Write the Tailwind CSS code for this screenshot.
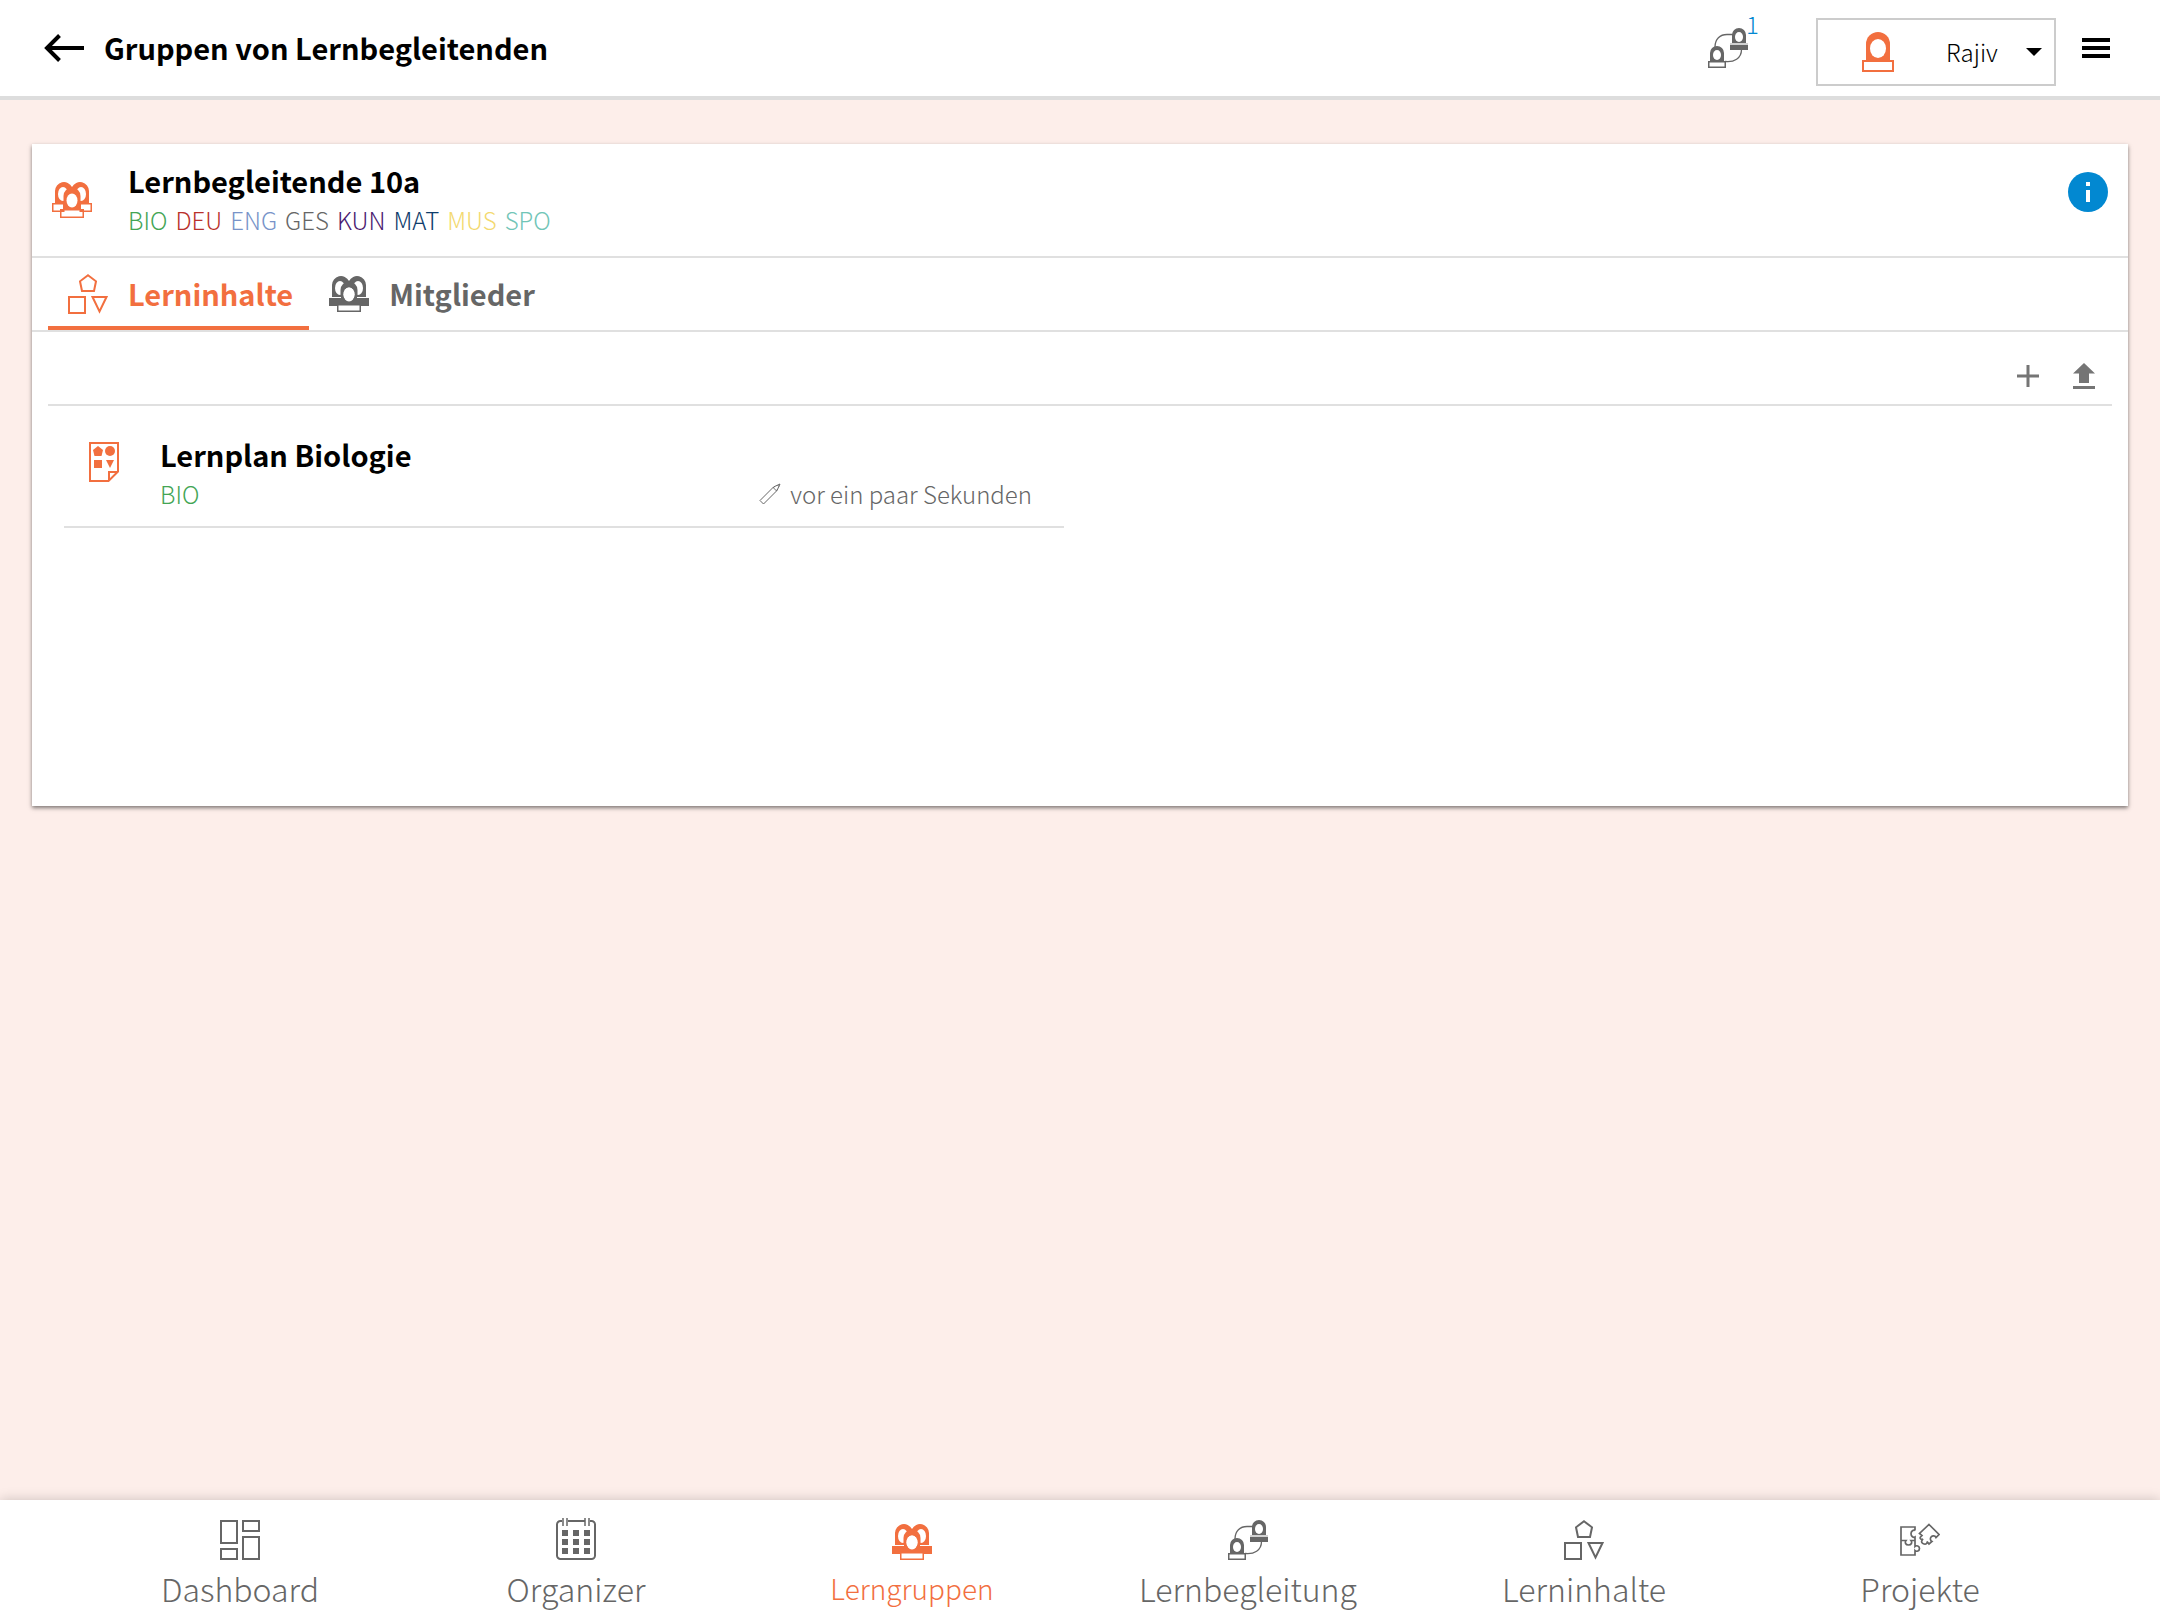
<!DOCTYPE html>
<html lang="de">
<head>
  <meta charset="utf-8" />
  <meta name="viewport" content="width=device-width, initial-scale=1.0" />
  <title>Gruppen von Lernbegleitenden</title>
  <script src="https://cdn.jsdelivr.net/npm/@tailwindcss/browser@4"></script>
</head>
<body class="bg-[#fdeeea] text-black font-['Noto_Sans_CJK_SC','Open_Sans',sans-serif] font-light antialiased">

  <!-- Icons -->
  <svg class="hidden" aria-hidden="true">
    <symbol id="icon-heads" viewBox="0 0 40 36">
      <path fill="currentColor" d="M3 21V9a9 9 0 0 1 17-4 9 9 0 0 1 17 4v12z" />
      <ellipse cx="11" cy="12" rx="5" ry="7" fill="#fff" />
      <ellipse cx="29" cy="12" rx="5" ry="7" fill="#fff" />
      <path fill="currentColor" d="M11.500 27V14a8.500 8.500 0 0 1 17 0v13z" />
      <ellipse cx="20" cy="18.500" rx="5.500" ry="7" fill="#fff" />
    </symbol>
    <symbol id="icon-group" viewBox="0 0 40 36">
      <use href="#icon-heads" width="40" height="36" />
      <path fill="#fff" stroke="currentColor" stroke-width="1.500" d="M.75 21.750h11v7.500h-11zM28.250 21.750h11v7.500h-11zM8.750 27.750h22.500v7.500H8.750z" />
    </symbol>
    <symbol id="icon-group-solid" viewBox="0 0 40 36">
      <use href="#icon-heads" width="40" height="36" />
      <path fill="#fff" d="M0 21h12v1H0zM28 21h12v1H28z" />
      <path fill="currentColor" d="M0 22h40v8H0z" />
      <ellipse cx="20" cy="18.500" rx="5.500" ry="7" fill="#fff" />
      <path fill="#fff" stroke="currentColor" stroke-width="1.500" d="M8.750 28.750h22.500v6.500H8.750z" />
    </symbol>
    <symbol id="icon-pair" viewBox="0 0 40 40">
      <path fill="none" stroke="currentColor" stroke-width="1.300" d="M7 19C7 11 12 6.500 19 6.500h6M17 33.500c9 1 16.500-3 16.500-12" />
      <path fill="currentColor" d="M24 15V7a7 7 0 0 1 14 0v8zM2 33v-8a7 7 0 0 1 14 0v8zM22 17h18v5H22z" />
      <path fill="currentColor" fill-opacity=".3" d="M22 15h18v2H22z" />
      <ellipse cx="31" cy="9" rx="4" ry="5" fill="#fff" />
      <ellipse cx="9" cy="27" rx="4" ry="5" fill="#fff" />
      <path fill="#fff" stroke="currentColor" stroke-width="1.500" d="M.75 33.750h16.500v5.500H.75z" />
    </symbol>
    <symbol id="icon-shapes" viewBox="0 0 40 40">
      <path fill="none" stroke="currentColor" stroke-width="2" d="M20 1.300l8 6-2 9.700H14l-2-9.700zM1 23h16v16H1zM24.500 23h14L31.500 37.500z" />
    </symbol>
  </svg>

  <div class="min-h-screen flex flex-col">
    <header class="h-[100px] shrink-0 flex items-start justify-between bg-white border-b-4 border-[#dddddd]">
      <div class="h-24 pl-11 flex items-center gap-5">
        <a href="#" aria-label="Zurück">
          <svg class="w-10 h-7" viewBox="0 0 40 28" fill="none" stroke="currentColor" stroke-width="4">
            <path d="M40 14H3M15.500 1.500L3 14l12.500 12.500" />
          </svg>
        </a>
        <h1 class="pb-[2px] text-[29px] leading-10 font-bold">Gruppen von Lernbegleitenden</h1>
      </div>

      <div class="h-24 pr-[50px] flex items-center">
        <button type="button" class="relative mr-[68px] text-[#666666]" aria-label="Verbindungen">
          <svg class="size-10"><use href="#icon-pair" /></svg>
          <span class="absolute left-[38px] -top-5 text-2xl leading-8 text-[#0288d1]">1</span>
        </button>
        <div class="mt-2 w-60 h-[68px] pl-11 pr-3 flex items-center border-2 border-[#cccccc]">
          <svg class="w-8 h-10 shrink-0 text-[#f26f3f]" viewBox="0 0 32 40">
            <path fill="currentColor" d="M4 28V12a12 12 0 0 1 24 0v16z" />
            <ellipse cx="16" cy="16.500" rx="8" ry="9.500" fill="#fff" />
            <path fill="#fff" stroke="currentColor" stroke-width="2" d="M1 29h30v10H1z" />
          </svg>
          <select aria-label="Benutzer" class="ml-[52px] grow min-w-0 appearance-none bg-transparent text-2xl leading-10 outline-none">
            <option>Rajiv</option>
          </select>
          <svg class="w-4 h-2 shrink-0" viewBox="0 0 16 8"><path d="M0 0h16L8 8z" /></svg>
        </div>
        <button type="button" class="ml-[26px]" aria-label="Menü">
          <svg class="w-7 h-5" viewBox="0 0 28 20"><path d="M0 0h28v4H0zM0 8h28v4H0zM0 16h28v4H0z" /></svg>
        </button>
      </div>
    </header>

    <main class="grow px-8 pt-11 pb-11">
      <section class="min-h-[662px] bg-white shadow-[0_2px_4px_rgba(0,0,0,0.5)]">
        <div class="h-[114px] pl-5 pr-5 flex items-start border-b-2 border-[#e0e0e0]">
          <svg class="mt-[38px] w-10 h-9 text-[#f26f3f]"><use href="#icon-group" /></svg>
          <div class="pt-4 ml-9">
            <h2 class="text-[29px] leading-10 font-bold">Lernbegleitende 10a</h2>
            <p class="flex gap-2 text-2xl leading-10">
              <span class="text-[#43a554]">BIO</span>
              <span class="text-[#b9312b]">DEU</span>
              <span class="text-[#7893c8]">ENG</span>
              <span class="text-[#666666]">GES</span>
              <span class="text-[#4b1a70]">KUN</span>
              <span class="text-[#0f3d6c]">MAT</span>
              <span class="text-[#f3d970]">MUS</span>
              <span class="text-[#71c5b7]">SPO</span>
            </p>
          </div>
          <button type="button" class="ml-auto mt-7" aria-label="Information">
            <svg class="size-10" viewBox="0 0 40 40">
              <circle cx="20" cy="20" r="20" fill="#0288d1" />
              <path fill="#fff" d="M18 10h4v4h-4zM18 18h4v12h-4z" />
            </svg>
          </button>
        </div>

        <nav class="h-[74px] px-4 flex border-b-2 border-[#e0e0e0] text-[29px] font-bold">
          <a href="#" class="pt-1 pl-5 pr-4 flex items-center gap-5 border-b-4 border-[#f26f3f] text-[#f26f3f]">
            <svg class="size-10"><use href="#icon-shapes" /></svg>
            Lerninhalte
          </a>
          <a href="#" class="pt-1 pl-5 pr-4 flex items-center gap-5 border-b-4 border-transparent text-[#666666]">
            <svg class="w-10 h-9"><use href="#icon-group-solid" /></svg>
            Mitglieder
          </a>
        </nav>

        <div class="mx-4 h-[74px] pt-4 pr-4 flex items-center justify-end gap-8 border-b-2 border-[#e0e0e0] text-[#757575]">
          <button type="button" aria-label="Hinzufügen">
            <svg class="size-6" viewBox="0 0 24 24" fill="currentColor"><path d="M1 10.500h9.500V1h3v9.500H23v3h-9.500V23h-3v-9.500H1z" /></svg>
          </button>
          <button type="button" aria-label="Hochladen">
            <svg class="w-6 h-[26px]" viewBox="0 0 24 26" fill="currentColor"><path d="M12 0l11 10.500h-6V20H7v-9.500H1zM1 23h22v3H1z" /></svg>
          </button>
        </div>

        <ul class="px-4 grid grid-cols-2">
          <li class="mx-4 h-[122px] pl-[25px] pr-8 flex items-start border-b-2 border-[#e0e0e0]">
            <svg class="mt-9 w-[30px] h-10 text-[#f26f3f]" viewBox="0 0 30 40">
              <path fill="none" stroke="currentColor" stroke-width="2" d="M1 1h28v28.500L19.500 39H1zM20 39v-9h9" />
              <path fill="currentColor" d="M9 4l5 4-1.500 6h-7L4 8zM5 18h8v8H5zM17 18h8l-4 8z" />
              <circle cx="21" cy="9" r="5" fill="currentColor" />
            </svg>
            <div class="ml-[41px] grow pt-7">
              <h3 class="text-[29px] leading-10 font-bold"><a href="#">Lernplan Biologie</a></h3>
              <div class="flex justify-between text-2xl leading-10">
                <span class="text-[#43a554]">BIO</span>
                <span class="flex items-center gap-[9px] text-[#666666]">
                  <svg class="size-[22px]" viewBox="0 0 22 22" fill="none" stroke="currentColor"><path d="M1 17.500L14.500 4l6.500-3-3 6.500L4.500 21zM14.500 4c.5 2 1.500 3 3.500 3.500M18.500 2l1.500 1.500" /></svg>
                  vor ein paar Sekunden
                </span>
              </div>
            </div>
          </li>
        </ul>
      </section>
    </main>

    <nav class="sticky bottom-0 h-[120px] shrink-0 px-[72px] grid grid-cols-6 bg-white shadow-[0_0_12px_rgba(0,0,0,0.2)] text-[32px] leading-10 text-[#666666]">
      <a href="#" class="pt-5 flex flex-col items-center gap-2">
        <svg class="size-10" viewBox="0 0 40 40" fill="none" stroke="currentColor" stroke-width="2"><path d="M1 1h16v22H1zM23 1h16v10H23zM23 17h16v22H23zM1 29h16v10H1z" /></svg>
        Dashboard
      </a>
      <a href="#" class="pt-5 flex flex-col items-center gap-2">
        <svg class="size-10 overflow-visible" viewBox="0 0 40 40" fill="none" stroke="currentColor" stroke-width="2">
          <path d="M6 1H4.500A3.500 3.500 0 0 0 1 4.500v31A3.500 3.500 0 0 0 4.500 39h31a3.500 3.500 0 0 0 3.500-3.500v-31A3.500 3.500 0 0 0 35.500 1H34M12 1h17" />
          <path stroke-width="1.500" d="M7-2v8M11-2v8M29-2v8M33-2v8" />
          <path fill="currentColor" stroke="none" d="M6 10h6v6H6zM17 10h6v6h-6zM28 10h6v6h-6zM6 19h6v6H6zM17 19h6v6h-6zM28 19h6v6h-6zM6 28h6v6H6zM17 28h6v6h-6zM28 28h6v6h-6z" />
        </svg>
        Organizer
      </a>
      <a href="#" aria-current="page" class="pt-6 flex flex-col items-center gap-2 text-[28px] text-[#f26f3f]">
        <svg class="w-10 h-9"><use href="#icon-group-solid" /></svg>
        Lerngruppen
      </a>
      <a href="#" class="pt-5 flex flex-col items-center gap-2">
        <svg class="size-10"><use href="#icon-pair" /></svg>
        Lernbegleitung
      </a>
      <a href="#" class="pt-5 flex flex-col items-center gap-2">
        <svg class="size-10"><use href="#icon-shapes" /></svg>
        Lerninhalte
      </a>
      <a href="#" class="pt-5 flex flex-col items-center gap-2">
        <svg class="size-10" viewBox="0 0 40 40" fill="none" stroke="currentColor" stroke-width="1.700">
          <path d="M15 10.500V7H1v28h14v-4.500c1.500 1.500 4.500.5 4.500-2s-3-3.500-4.500-2V20.500h-4c1.500 2 .5 4.500-2.500 4.500S4.500 22.500 6 20.500H1M15 20.500V17c-1.500 1-4-.5-4-3.200s2.500-4.300 4-3.300" />
          <path d="M29 4.500l10 10-3 3c-1-2-3.500-2-4.800-.7s-1 3.700.8 4.700l-3 2.500-2-2.500c.5 2-1 3-3 2.500s-3-2-2-3.700l1-1.300c-2 1-3.500-.5-2.500-2l1.500-1.500-2.500-2z" />
        </svg>
        Projekte
      </a>
    </nav>
  </div>
</body>
</html>
